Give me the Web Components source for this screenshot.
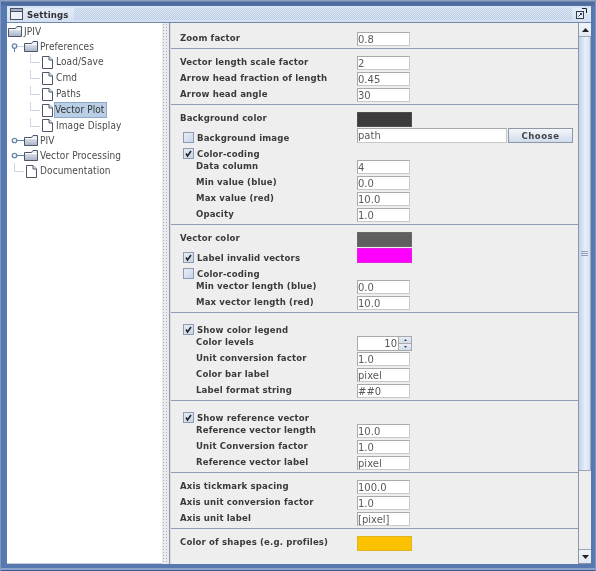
<!DOCTYPE html>
<html>
<head>
<meta charset="utf-8">
<title>Settings</title>
<style>
  html, body { margin: 0; padding: 0; background: #5b78ab; }
  body { font-family: "DejaVu Sans", sans-serif; }
</style>
</head>
<body>
<settings-window title-text="Settings">
  <file-tree slot="tree">
    <tree-node kind="folder" indent="0" stub="none">JPIV</tree-node>
    <tree-node kind="folder" indent="1" stub="open">Preferences</tree-node>
    <tree-node kind="file" indent="2" stub="line">Load/Save</tree-node>
    <tree-node kind="file" indent="2" stub="line">Cmd</tree-node>
    <tree-node kind="file" indent="2" stub="line">Paths</tree-node>
    <tree-node kind="file" indent="2" stub="line" selected>Vector Plot</tree-node>
    <tree-node kind="file" indent="2" stub="line" short>Image Display</tree-node>
    <tree-node kind="folder" indent="1" stub="closed">PIV</tree-node>
    <tree-node kind="folder" indent="1" stub="closed">Vector Processing</tree-node>
    <tree-node kind="file" indent="1" stub="line">Documentation</tree-node>
  </file-tree>

  <pref-section>
    <pref-row label="Zoom factor"><text-field>0.8</text-field></pref-row>
  </pref-section>
  <pref-section>
    <pref-row label="Vector length scale factor"><text-field>2</text-field></pref-row>
    <pref-row label="Arrow head fraction of length"><text-field>0.45</text-field></pref-row>
    <pref-row label="Arrow head angle"><text-field>30</text-field></pref-row>
  </pref-section>
  <pref-section>
    <pref-row label="Background color"><color-swatch color="#3b3b3b"></color-swatch></pref-row>
    <pref-row label="Background image" check="off"><text-field wide>path</text-field><metal-button>Choose</metal-button></pref-row>
    <pref-row label="Color-coding" check="on"></pref-row>
    <pref-row label="Data column" indent><text-field>4</text-field></pref-row>
    <pref-row label="Min value (blue)" indent><text-field>0.0</text-field></pref-row>
    <pref-row label="Max value (red)" indent><text-field>10.0</text-field></pref-row>
    <pref-row label="Opacity" indent><text-field>1.0</text-field></pref-row>
  </pref-section>
  <pref-section>
    <pref-row label="Vector color"><color-swatch color="#5f5f5f"></color-swatch></pref-row>
    <pref-row label="Label invalid vectors" check="on"><color-swatch color="#ff00ff"></color-swatch></pref-row>
    <pref-row label="Color-coding" check="off"></pref-row>
    <pref-row label="Min vector length (blue)" indent><text-field>0.0</text-field></pref-row>
    <pref-row label="Max vector length (red)" indent><text-field>10.0</text-field></pref-row>
  </pref-section>
  <pref-section>
    <pref-row label="Show color legend" check="on"></pref-row>
    <pref-row label="Color levels" indent><spin-field>10</spin-field></pref-row>
    <pref-row label="Unit conversion factor" indent><text-field>1.0</text-field></pref-row>
    <pref-row label="Color bar label" indent><text-field>pixel</text-field></pref-row>
    <pref-row label="Label format string" indent><text-field>##0</text-field></pref-row>
  </pref-section>
  <pref-section>
    <pref-row label="Show reference vector" check="on"></pref-row>
    <pref-row label="Reference vector length" indent><text-field>10.0</text-field></pref-row>
    <pref-row label="Unit Conversion factor" indent><text-field>1.0</text-field></pref-row>
    <pref-row label="Reference vector label" indent><text-field>pixel</text-field></pref-row>
  </pref-section>
  <pref-section>
    <pref-row label="Axis tickmark spacing"><text-field>100.0</text-field></pref-row>
    <pref-row label="Axis unit conversion factor"><text-field>1.0</text-field></pref-row>
    <pref-row label="Axis unit label"><text-field>[pixel]</text-field></pref-row>
  </pref-section>
  <pref-section last>
    <pref-row label="Color of shapes (e.g. profiles)"><color-swatch color="#fcc200"></color-swatch></pref-row>
  </pref-section>
</settings-window>

<script>
// small helper, every element just stamps its html into an open shadow root
function shadow(el, html) {
  el.attachShadow({ mode: "open" }).innerHTML = html;
}

const UI_FONT = `"DejaVu Sans Condensed", "DejaVu Sans", sans-serif`;

class SettingsWindow extends HTMLElement {
  connectedCallback() {
    shadow(this, `
      <style>
        :host {
          display: flex; flex-direction: column; box-sizing: border-box;
          width: 596px; height: 571px; padding: 6px 5px 7px 7px;
          background: linear-gradient(#97a6c4 0, #8b9dbe 1px, #4f6c9f 2px, #4f6c9f 5px, #5878b0 6px);
          box-shadow: inset 1px 0 #7f9ac8, inset -1px 0 #7f9ac8, inset 0 -1px #3f5a8c, inset 0 -3px #8ba3cb;
          filter: blur(.3px);
        }
        .title {
          display: flex; align-items: center; gap: 4px; height: 17px; flex: none;
          padding: 0 4px 0 3px; box-sizing: border-box;
          background: linear-gradient(#cfdef2, #e3ecf8 3px, #d2dff1);
          border-bottom: 1px solid #7288ad;
        }
        .name { font: bold 9.5px ${UI_FONT}; color: #333; letter-spacing: .15px; margin-right: 1px; }
        .dots {
          flex: 1; height: 12px;
          background: conic-gradient(#bccde4 25%, transparent 0 50%, #bccde4 0 75%, transparent 0) 0 0/2px 2px;
        }
        .body { flex: 1; display: flex; min-height: 0; background: #eeeeee; }
        .tree { width: 155px; flex: none; background: #fff; border-bottom: 1px solid #c4ccd8; }
        .split {
          width: 8px; flex: none; box-sizing: border-box; background-color: #e9ebee;
          background-image: radial-gradient(#b0b3bc .7px, transparent .9px);
          background-size: 3px 3px;
          border-right: 1px solid #8f97a6;
        }
        .panel { flex: 1; min-width: 0; display: flex; border-left: 1px solid #dcdcdc; }
        .content { flex: 1; min-width: 0; }
      </style>
      <div class="title">
        <svg width="13" height="12" viewBox="0 0 13 12">
          <rect x=".5" y=".5" width="12" height="11" fill="#eef2f8" stroke="#4a4f5a"/>
          <rect x="1" y="1" width="11" height="2" fill="#9fb3d1"/>
          <path d="M1 3.5H12" stroke="#4a4f5a"/>
        </svg>
        <span class="name">${this.getAttribute("title-text")}</span>
        <span class="dots"></span>
        <svg width="11" height="12" viewBox="0 0 11 12">
          <rect x=".5" y="3.5" width="7" height="7" fill="#e6edf6" stroke="#333c4c"/>
          <path d="M2.5 8.5L5.5 5.5M4 5.5H5.5V7" stroke="#333c4c" fill="none"/>
          <path d="M6 .5H10.5V5" stroke="#222" fill="none"/>
        </svg>
      </div>
      <div class="body">
        <div class="tree"><slot name="tree"></slot></div>
        <div class="split"></div>
        <div class="panel">
          <div class="content"><slot></slot></div>
          <metal-scrollbar></metal-scrollbar>
        </div>
      </div>`);
  }
}

class FileTree extends HTMLElement {
  connectedCallback() {
    shadow(this, `
      <style>
        :host { display: flex; flex-direction: column; padding: 1px 0 0 1px; }
      </style>
      <slot></slot>`);
  }
}

const FOLDER = `<svg width="14" height="11" viewBox="0 0 14 11">
  <defs><linearGradient id="f" x1="0" y1="0" x2="0" y2="1"><stop offset="0" stop-color="#f4f7fb"/><stop offset="1" stop-color="#a4b2c8"/></linearGradient></defs>
  <path d="M.5 2.5H7.5L9 .5H13.5V10.5H.5Z" fill="url(#f)" stroke="#4d5566"/>
  <path d="M1 3.5H13" stroke="#fff"/>
</svg>`;
const FILE = `<svg width="11" height="13" viewBox="0 0 11 13">
  <path d="M.5 .5H7L10.5 4V12.5H.5Z" fill="#fff" stroke="#4d5566"/>
  <path d="M7 .5V4H10.5" fill="#e3e9f2" stroke="#4d5566"/>
</svg>`;

class TreeNode extends HTMLElement {
  connectedCallback() {
    const kind = this.getAttribute("kind");
    const indent = +this.getAttribute("indent");
    const stub = this.getAttribute("stub");
    // every level is 16px: the handle column of a node sits in the level before it
    const x = Math.max(indent - 1, 0) * 16;
    let handle = "";
    if (stub === "line") {
      handle = `<svg class="stub" width="16" height="16" viewBox="0 0 16 16"><path d="M6.5 8.5H16M6.5 0V8.5" stroke="#ccd5e3" fill="none"/></svg>`;
    } else if (stub === "open") {
      handle = `<svg class="stub" width="16" height="15" viewBox="0 0 16 15"><path d="M9 7.5H16" stroke="#ccd5e3"/><circle cx="6.5" cy="7" r="2.3" fill="#eef2f8" stroke="#5f7ba8" stroke-width="1.1"/><path d="M6.5 9V13" stroke="#5f7ba8"/></svg>`;
    } else if (stub === "closed") {
      handle = `<svg class="stub" width="16" height="15" viewBox="0 0 16 15"><path d="M9 7.5H16" stroke="#5f7ba8"/><circle cx="6.5" cy="7.5" r="2.3" fill="#eef2f8" stroke="#5f7ba8" stroke-width="1.1"/></svg>`;
    }
    const h = kind === "folder" || this.hasAttribute("short") ? 15 : 16;
    shadow(this, `
      <style>
        :host { display: flex; align-items: center; height: ${h}px; padding-left: ${x}px; }
        .stub { flex: none; }
        .icon { display: flex; flex: none; width: 15px; box-sizing: border-box; padding-left: ${kind === "folder" ? 0 : 2}px; }
        .text {
          font: 10px/14px ${UI_FONT}; color: #4a4a4a; letter-spacing: .1px;
          padding: 0 1px; white-space: nowrap;
        }
        :host([selected]) .text { background: #b8cfe5; border: 1px solid #8fa8c8; padding: 0 1px 0 0; margin-left: -1px; color: #333; }
      </style>
      ${handle}
      <span class="icon">${kind === "folder" ? FOLDER : FILE}</span>
      <span class="text"><slot></slot></span>`);
  }
}

class PrefSection extends HTMLElement {
  connectedCallback() {
    shadow(this, `
      <style>
        :host {
          display: block; box-sizing: border-box; padding: 7px 0 0 9px;
          border-bottom: 1px solid #929eb4;
        }
        :host(:first-of-type) { padding-top: 9px; }
        :host([last]) { border-bottom: 0; }
      </style>
      <slot></slot>`);
  }
}

class PrefRow extends HTMLElement {
  connectedCallback() {
    const check = this.getAttribute("check");
    const indent = this.hasAttribute("indent");
    let box = "";
    if (check) {
      const tick = check === "on"
        ? `<svg width="9" height="9" viewBox="0 0 9 9"><path d="M2 4.5L3.5 7L7 2" fill="none" stroke="#222" stroke-width="1.5"/></svg>` : "";
      box = `<span class="box">${tick}</span>`;
    }
    shadow(this, `
      <style>
        :host { display: flex; height: 16px; align-items: flex-start; }
        .cell { width: 177px; flex: none; display: flex; align-items: flex-start; }
        .indent { padding-left: 16px; box-sizing: border-box; }
        .label {
          font: bold 9.5px/13px ${UI_FONT}; color: #3a3a3a;
          letter-spacing: .15px; white-space: nowrap;
        }
        .cell:not(.checked) .label { line-height: 11px; }
        .checked { padding: 3px 0 0 3px; box-sizing: border-box; }
        .box {
          flex: none; width: 11px; height: 11px; margin: 1px 3px 0 0; box-sizing: border-box;
          background: linear-gradient(135deg, #e8eef7, #c6d4e8);
          border: 1px solid #8f9bb0;
          display: flex;
        }
        .controls { display: flex; gap: 1px; }
      </style>
      <div class="cell ${indent ? "indent" : ""} ${check ? "checked" : ""}">
        ${box}<span class="label">${this.getAttribute("label")}</span>
      </div>
      <div class="controls"><slot></slot></div>`);
  }
}

class TextField extends HTMLElement {
  connectedCallback() {
    shadow(this, `
      <style>
        :host {
          display: block; box-sizing: border-box; width: 53px; height: 14px;
          background: #fff; border: 1px solid #a9a9a9; border-right-color: #c8c8c8; border-bottom-color: #c8c8c8;
          overflow: hidden;
          font: 10px/13px "DejaVu Sans", sans-serif; color: #5a5a5a; white-space: nowrap;
        }
        :host([wide]) { width: 150px; height: 15px; }
      </style>
      <slot></slot>`);
  }
}

class SpinField extends HTMLElement {
  connectedCallback() {
    shadow(this, `
      <style>
        :host {
          display: flex; box-sizing: border-box; width: 55px; height: 15px;
          background: #fff; border: 1px solid #a9a9a9;
          font: 10px/13px "DejaVu Sans", sans-serif; color: #555;
        }
        .val { flex: 1; text-align: right; padding-right: 1px; }
        .arrows { width: 12px; flex: none; display: flex; flex-direction: column; border-left: 1px solid #a9a9a9; }
        .arrows span {
          flex: 1; background: linear-gradient(#e8eef7, #d0dbeb);
          display: flex; align-items: center; justify-content: center;
        }
        .arrows span + span { border-top: 1px solid #a9a9a9; }
      </style>
      <span class="val"><slot></slot></span>
      <span class="arrows">
        <span><svg width="3" height="2"><path d="M1.5 0L3 2H0Z" fill="#444"/></svg></span>
        <span><svg width="3" height="2"><path d="M0 0H3L1.5 2Z" fill="#444"/></svg></span>
      </span>`);
  }
}

class ColorSwatch extends HTMLElement {
  connectedCallback() {
    const color = this.getAttribute("color");
    shadow(this, `
      <style>
        :host {
          display: block; box-sizing: border-box; width: 55px; height: 15px;
          background: ${color}; border: 1px solid color-mix(in srgb, ${color} 75%, #888);
        }
      </style>`);
  }
}

class MetalButton extends HTMLElement {
  connectedCallback() {
    shadow(this, `
      <style>
        :host {
          display: flex; align-items: center; justify-content: center; box-sizing: border-box;
          width: 65px; height: 15px;
          background: linear-gradient(#f4f7fb, #cfdbec);
          border: 1px solid #8f97a6;
          font: bold 9.5px ${UI_FONT}; color: #444; letter-spacing: .5px;
        }
      </style>
      <slot></slot>`);
  }
}

class MetalScrollbar extends HTMLElement {
  connectedCallback() {
    shadow(this, `
      <style>
        :host {
          display: flex; flex-direction: column; flex: none; width: 13px; box-sizing: border-box;
          border-left: 1px solid #8f97a6; background: #eee;
        }
        .btn {
          height: 13px; flex: none; display: flex; align-items: center; justify-content: center;
          background: linear-gradient(#f0f4fa, #e2e8f2); border-bottom: 1px solid #9aa5b8;
        }
        .btn.down { border-top: 1px solid #9aa5b8; border-bottom: 1px solid #8f97a6; }
        .thumb {
          height: 434px; flex: none; box-sizing: border-box;
          background: linear-gradient(90deg, #c4d2ee, #eaf0fa 60%, #d3def0);
          border-bottom: 1px solid #9aa5b8; border-right: 1px solid #9aa5b8;
          display: flex; align-items: center; justify-content: center;
        }
        .grip { width: 7px; height: 5px; background-image: linear-gradient(#8fa0bd 1px, transparent 1px); background-size: 7px 2px; }
        .track { flex: 1; }
      </style>
      <div class="btn"><svg width="7" height="4"><path d="M3.5 0L7 4H0Z" fill="#222"/></svg></div>
      <div class="thumb"><div class="grip"></div></div>
      <div class="track"></div>
      <div class="btn down"><svg width="7" height="4"><path d="M0 0H7L3.5 4Z" fill="#222"/></svg></div>`);
  }
}

customElements.define("settings-window", SettingsWindow);
customElements.define("file-tree", FileTree);
customElements.define("tree-node", TreeNode);
customElements.define("pref-section", PrefSection);
customElements.define("pref-row", PrefRow);
customElements.define("text-field", TextField);
customElements.define("spin-field", SpinField);
customElements.define("color-swatch", ColorSwatch);
customElements.define("metal-button", MetalButton);
customElements.define("metal-scrollbar", MetalScrollbar);
</script>
</body>
</html>
